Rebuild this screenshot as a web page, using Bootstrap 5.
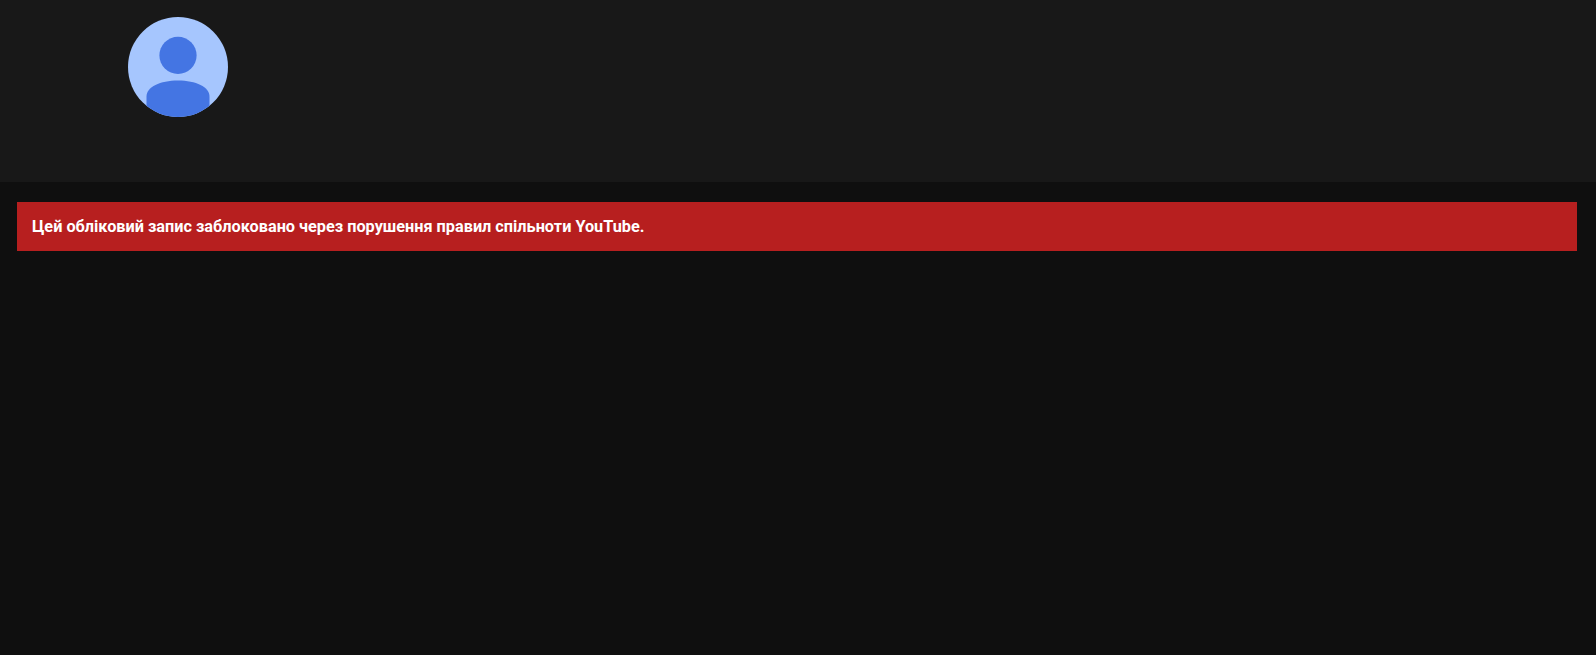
<!DOCTYPE html>
<html lang="uk">
<head>
<meta charset="utf-8">
<title>YouTube</title>
<link href="https://cdn.jsdelivr.net/npm/bootstrap@5.3.0/dist/css/bootstrap.min.css" rel="stylesheet">
<style>
html, body { height: 100%; }
body { background: #0f0f0f; font-family: Roboto, "Liberation Sans", sans-serif; overflow: hidden; }
.channel-head { background: #181818; height: 182px; padding: 17px 0 0 128px; }
.channel-avatar { display: block; width: 100px; height: 100px; }
.ban-wrap { padding: 20px 19px 0 17px; }
.ban-note { background: #b71f1f; color: #fff; font-size: 16.27px; font-weight: 700; line-height: 21px; padding: 14px 15px; }
</style>
</head>
<body>
<header class="channel-head">
<svg class="channel-avatar" viewBox="0 0 100 100" role="img" aria-label="Аватар">
<defs><clipPath id="av"><circle cx="50" cy="50" r="50"/></clipPath></defs>
<circle cx="50" cy="50" r="50" fill="#a6c6fe"/>
<g clip-path="url(#av)" fill="#4475e3">
<circle cx="50" cy="38.4" r="18.6"/>
<path d="M18.5 100V79.5C18.5 70 32 63.5 50 63.5S81.5 70 81.5 79.5V100Z"/>
</g>
</svg>
</header>
<main class="ban-wrap">
<div class="ban-note">Цей обліковий запис заблоковано через порушення правил спільноти YouTube.</div>
</main>
<script src="https://cdn.jsdelivr.net/npm/bootstrap@5.3.0/dist/js/bootstrap.bundle.min.js"></script>
</body>
</html>
